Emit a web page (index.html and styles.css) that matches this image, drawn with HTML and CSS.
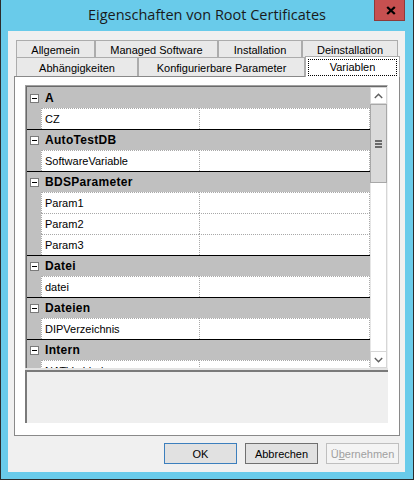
FILE: index.html
```html
<!DOCTYPE html>
<html>
<head>
<meta charset="utf-8">
<link rel="stylesheet" href="styles.css">
</head>
<body>
<div class="window">
  <div class="titlebar">
    <span class="tb-spacer"></span>
    <div class="title">Eigenschaften von Root Certificates</div>
    <div class="close">
      <svg width="10" height="9" viewBox="0 0 10 9"><path d="M1.2 1 L8.8 8 M8.8 1 L1.2 8" stroke="#000" stroke-width="2.3" fill="none"/></svg>
    </div>
  </div>
  <div class="client">
    <div class="tabrow row1">
      <div class="tab w-allg">Allgemein</div>
      <div class="tab w-man">Managed Software</div>
      <div class="tab w-inst">Installation</div>
      <div class="tab w-dein">Deinstallation</div>
    </div>
    <div class="tabrow row2">
      <div class="tab w-abh">Abhängigkeiten</div>
      <div class="tab w-konf">Konfigurierbare Parameter</div>
      <div class="tab selected w-var"><span class="focus">Variablen</span></div>
    </div>
    <div class="panel">
      <div class="pgrid">
        <div class="list">
          <div class="rows">
            <div class="cat first"><span class="minus"></span><span class="cat-label">A</span></div>
            <div class="prop"><span class="gutter"></span><span class="name">CZ</span><span class="value"></span></div>
            <div class="cat"><span class="minus"></span><span class="cat-label">AutoTestDB</span></div>
            <div class="prop"><span class="gutter"></span><span class="name">SoftwareVariable</span><span class="value"></span></div>
            <div class="cat"><span class="minus"></span><span class="cat-label">BDSParameter</span></div>
            <div class="prop"><span class="gutter"></span><span class="name">Param1</span><span class="value"></span></div>
            <div class="prop"><span class="gutter"></span><span class="name">Param2</span><span class="value"></span></div>
            <div class="prop"><span class="gutter"></span><span class="name">Param3</span><span class="value"></span></div>
            <div class="cat"><span class="minus"></span><span class="cat-label">Datei</span></div>
            <div class="prop"><span class="gutter"></span><span class="name">datei</span><span class="value"></span></div>
            <div class="cat"><span class="minus"></span><span class="cat-label">Dateien</span></div>
            <div class="prop"><span class="gutter"></span><span class="name">DIPVerzeichnis</span><span class="value"></span></div>
            <div class="cat"><span class="minus"></span><span class="cat-label">Intern</span></div>
            <div class="prop"><span class="gutter"></span><span class="name">NATVerbindung</span><span class="value"></span></div>
          </div>
          <div class="vscroll">
            <div class="sbtn">
              <svg width="9" height="6" viewBox="0 0 9 6"><path d="M0.8 5 L4.5 1.3 L8.2 5" stroke="#606060" stroke-width="1.4" fill="none"/></svg>
            </div>
            <div class="thumb"><span class="grip"></span><span class="grip"></span><span class="grip"></span></div>
            <div class="track"></div>
            <div class="sbtn">
              <svg width="9" height="6" viewBox="0 0 9 6"><path d="M0.8 1 L4.5 4.7 L8.2 1" stroke="#606060" stroke-width="1.4" fill="none"/></svg>
            </div>
          </div>
        </div>
        <div class="splitter"></div>
        <div class="desc"></div>
      </div>
    </div>
    <div class="buttons">
      <div class="btn default">OK</div>
      <div class="btn">Abbrechen</div>
      <div class="btn disabled">Ü<u>b</u>ernehmen</div>
    </div>
  </div>
</div>
</body>
</html>
```
FILE: styles.css
```css
html, body {
  margin: 0;
  padding: 0;
  background: #ffffff;
}

.window {
  box-sizing: border-box;
  width: 414px;
  height: 480px;
  background: #69cbea;
  border-left: 1px solid #2b2b2b;
  border-right: 1px solid #2b2b2b;
  border-bottom: 1px solid #2b2b2b;
  display: flex;
  flex-direction: column;
  font-family: "Liberation Sans", Arial, sans-serif;
  font-size: 11px;
  color: #000;
}

.titlebar {
  height: 31px;
  display: grid;
  grid-template-columns: 1fr auto 1fr;
}

.title {
  font-family: "Open Sans", "Noto Sans", sans-serif;
  font-size: 14.5px;
  line-height: 29px;
  color: #1a1a1a;
  white-space: nowrap;
}

.close {
  justify-self: end;
  align-self: start;
  margin-right: 8px;
  box-sizing: border-box;
  width: 31px;
  height: 21px;
  background: #c75050;
  border-left: 1px solid #8e3a3a;
  border-right: 1px solid #8e3a3a;
  border-bottom: 1px solid #8e3a3a;
  display: flex;
  align-items: center;
  justify-content: center;
  padding-left: 3px;
}

.client {
  margin: 0 8px 7px 7px;
  height: 441px;
  box-sizing: border-box;
  background: #f0f0f0;
  padding: 9px 5px 8px 6px;
  display: flex;
  flex-direction: column;
}

.tabrow {
  display: flex;
  margin-left: 2px;
}

.row1 { height: 17px; }
.row2 { height: 19px; }

.tab {
  box-sizing: border-box;
  height: 100%;
  background: #e9e9e9;
  border-top: 1px solid #acacac;
  border-left: 1px solid #acacac;
  border-right: 1px solid #acacac;
  display: flex;
  align-items: center;
  justify-content: center;
  white-space: nowrap;
}

.row1 .tab { padding-top: 1px; }
.row2 .tab { padding-top: 2px; }

.w-allg { width: 79px; }
.w-man { width: 123px; }
.w-inst { width: 84px; }
.w-dein { width: 96px; }
.w-abh { width: 122px; }
.w-konf { width: 167px; }
.w-var { width: 95px; }

.tab.selected {
  position: relative;
  z-index: 2;
  height: 21px;
  margin-top: -1px;
  background: #ffffff;
  padding: 2px 2px 1px 2px;
  align-items: stretch;
}

.focus {
  flex: 1;
  border: 1px dotted #000;
  display: flex;
  align-items: center;
  justify-content: center;
  padding-bottom: 1px;
}

.panel {
  box-sizing: border-box;
  height: 360px;
  background: #ffffff;
  border: 1px solid #898989;
  padding: 8px 11px 12px 10px;
}

.pgrid {
  height: 338px;
  display: flex;
  flex-direction: column;
}

.list {
  height: 283px;
  box-sizing: border-box;
  border-top: 1px solid #a0a0a0;
  border-left: 1px solid #a0a0a0;
  border-right: 1px solid #f0f0f0;
  display: flex;
  overflow: hidden;
}

.list > .rows, .list > .vscroll {
  border-top: 1px solid #696969;
}

.rows {
  width: 344px;
  border-left: 1px solid #696969;
  box-sizing: border-box;
  background: #c0c0c0;
  overflow: hidden;
}

.cat {
  box-sizing: border-box;
  height: 21px;
  border-top: 1px solid #000;
  display: flex;
  align-items: center;
  padding-left: 3px;
  background: #c0c0c0;
}

.cat.first { border-top-color: #c0c0c0; }

.minus {
  box-sizing: border-box;
  width: 9px;
  height: 9px;
  border: 1px solid #7a7a7a;
  background: #fff;
  display: flex;
  align-items: center;
  justify-content: center;
  margin-right: 6px;
}

.minus::before {
  content: "";
  width: 5px;
  height: 1px;
  background: #000;
}

.cat-label {
  font-weight: bold;
  font-size: 12px;
  letter-spacing: 0.3px;
  padding-bottom: 1px;
}

.prop {
  height: 21px;
  display: flex;
}

.gutter {
  width: 14px;
  background: #c0c0c0;
}

.name, .value {
  box-sizing: border-box;
  height: 21px;
  background: #fff;
  border-top: 1px dotted #a8a8a8;
  border-left: 1px dotted #a8a8a8;
}

.name {
  width: 158px;
  padding-left: 3px;
  padding-bottom: 1px;
  display: flex;
  align-items: center;
  white-space: nowrap;
  overflow: hidden;
}

.value {
  width: 171px;
  border-right: 1px dotted #a8a8a8;
}

.vscroll {
  width: 17px;
  display: flex;
  flex-direction: column;
  background: #fff;
}

.sbtn {
  box-sizing: border-box;
  height: 17px;
  border: 1px solid #d6d6d6;
  background: #fff;
  display: flex;
  align-items: center;
  justify-content: center;
}

.thumb {
  box-sizing: border-box;
  height: 79px;
  background: #dadada;
  border: 1px solid #a8a8a8;
  display: flex;
  flex-direction: column;
  align-items: center;
  justify-content: center;
  gap: 1px;
}

.grip {
  width: 7px;
  height: 2px;
  background: #6a6a6a;
}

.track {
  flex: 1;
  border-left: 1px solid #e6e6e6;
  border-right: 1px solid #d6d6d6;
}

.splitter {
  height: 2px;
  background: #e3e3e3;
}

.desc {
  flex: 1;
  background: #efefef;
  border-top: 2px solid #7a7a7a;
  border-left: 2px solid #7a7a7a;
}

.buttons {
  display: flex;
  justify-content: flex-end;
  gap: 8px;
  margin-top: 7px;
  margin-right: 1px;
}

.btn {
  box-sizing: border-box;
  width: 73px;
  height: 21px;
  background: #e1e1e1;
  border: 1px solid #707070;
  display: flex;
  align-items: center;
  justify-content: center;
  font-size: 11px;
}

.btn.default {
  border-color: #3c7fbd;
}

.btn.disabled {
  background: #f4f4f4;
  border-color: #bfbfbf;
  color: #a0a0a0;
}
```
